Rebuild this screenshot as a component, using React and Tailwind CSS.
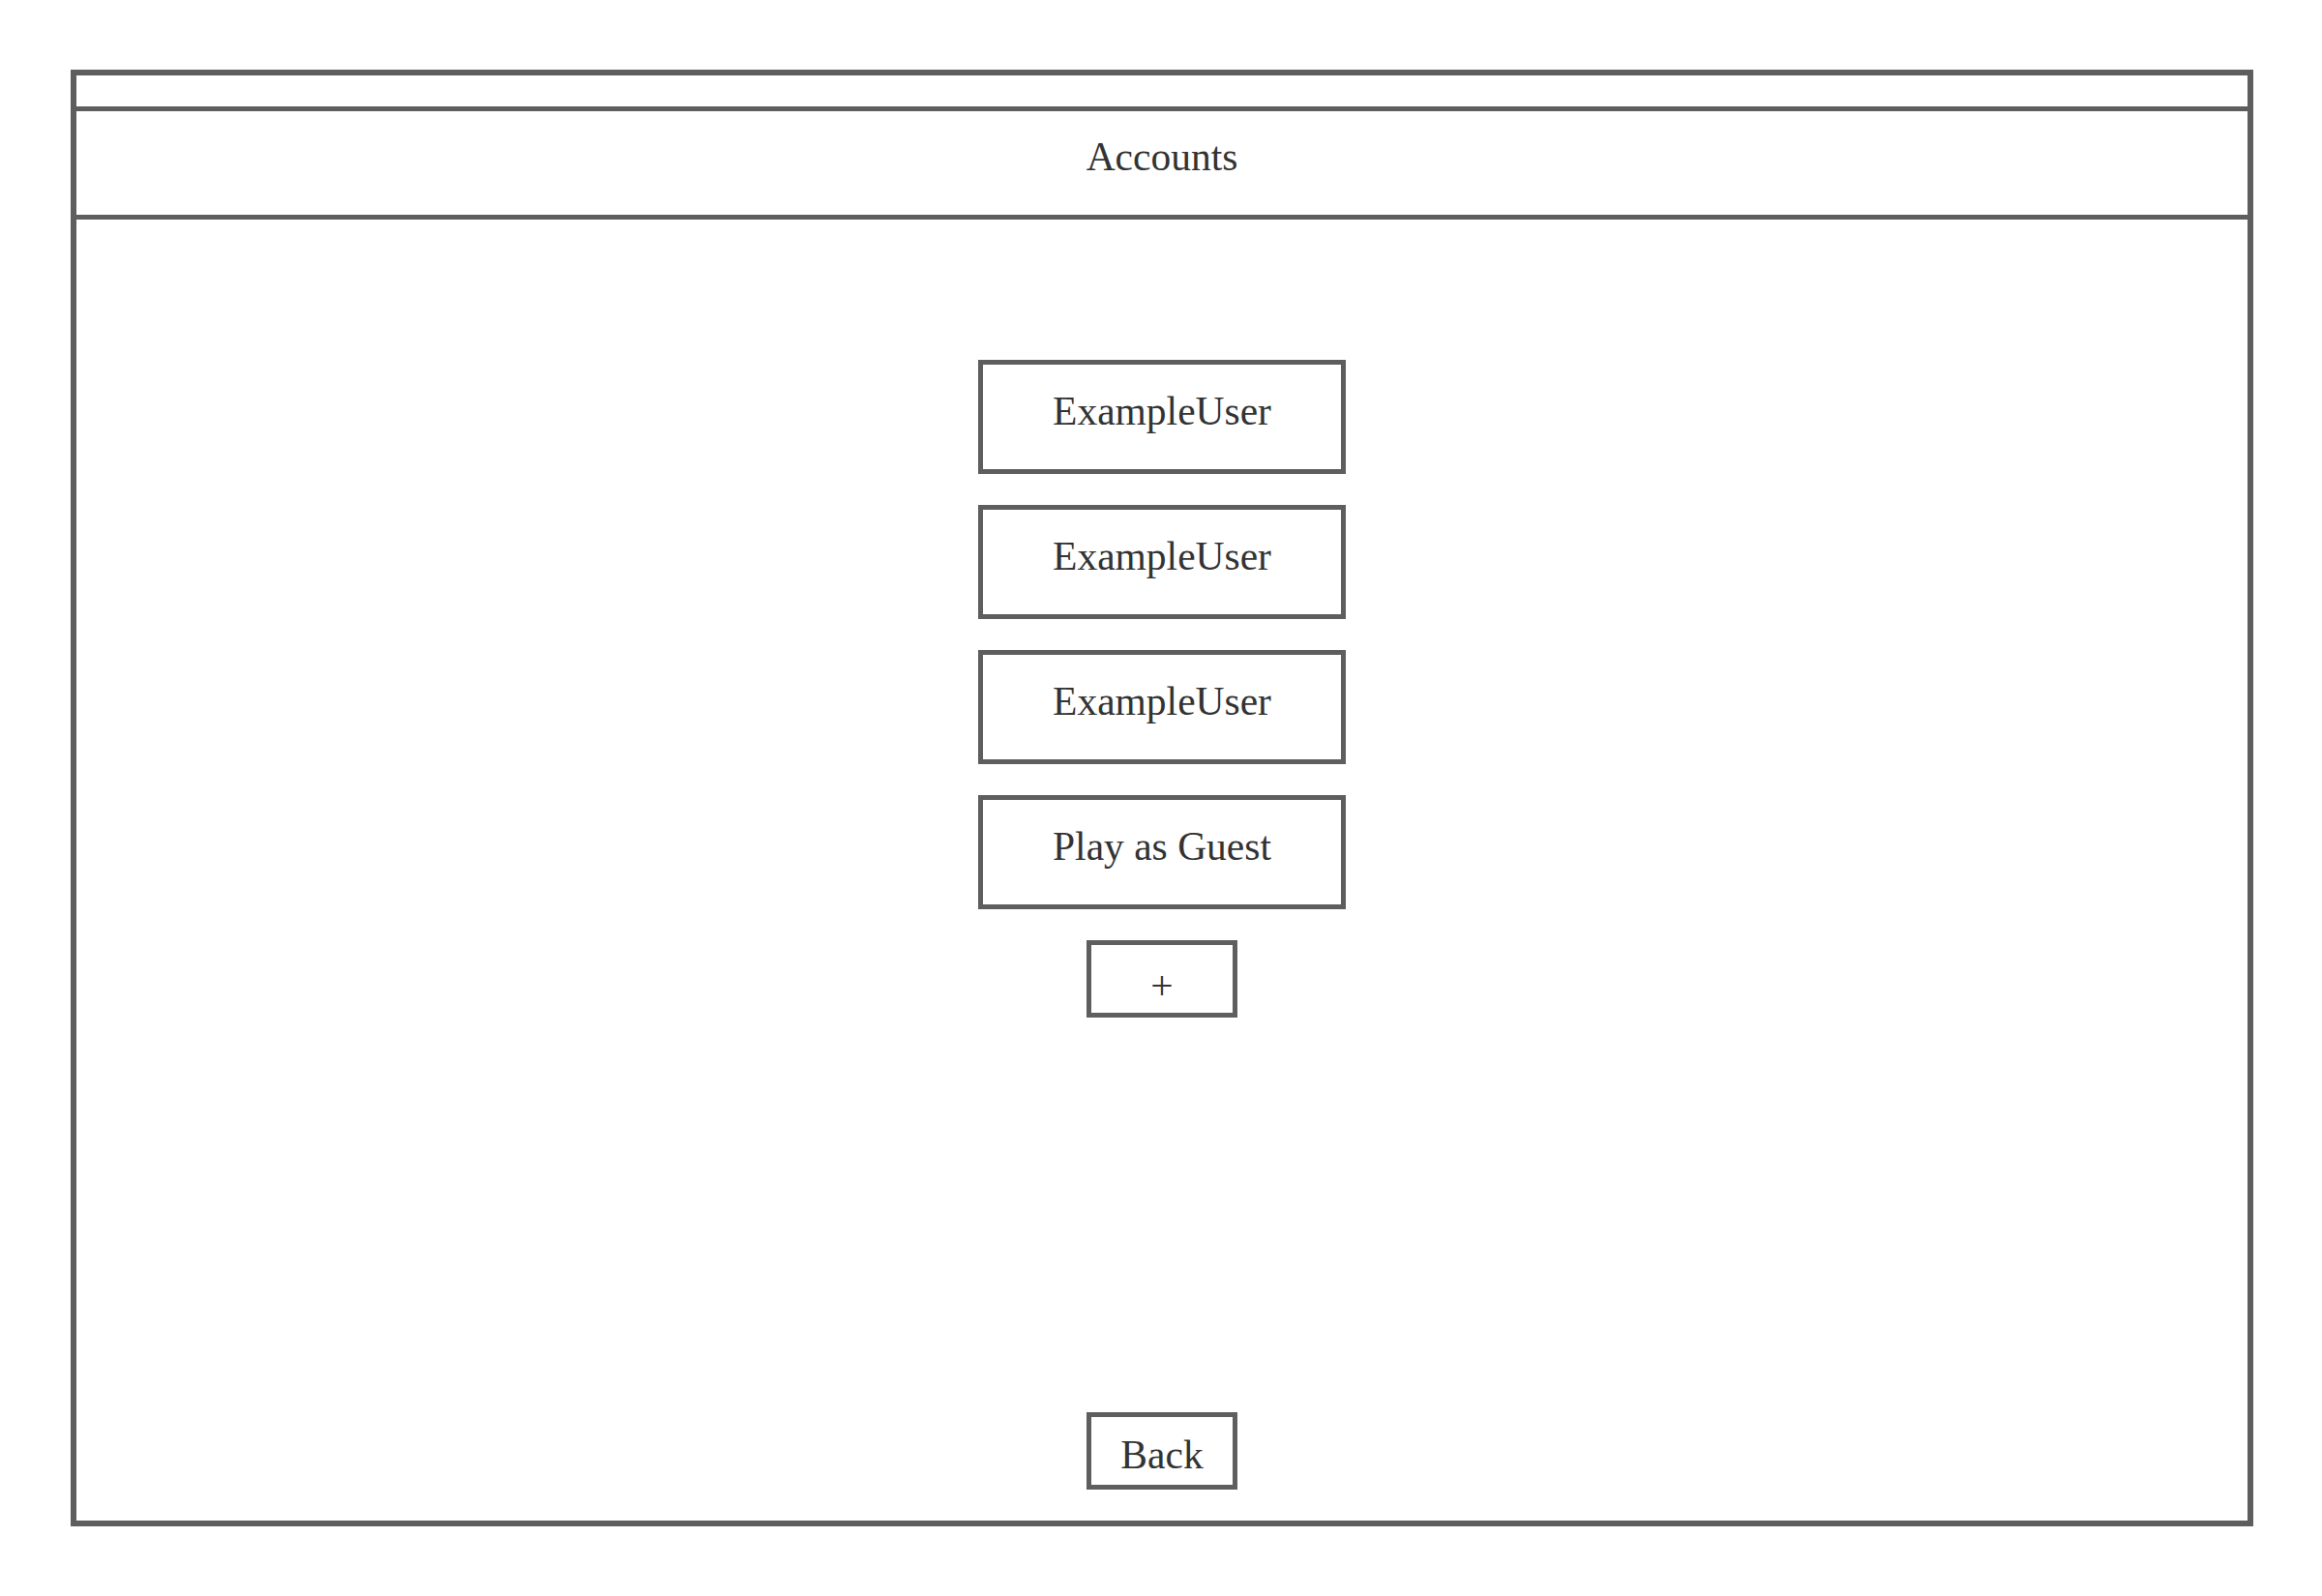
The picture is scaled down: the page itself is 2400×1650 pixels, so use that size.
import React from "react";

const users = ["ExampleUser", "ExampleUser", "ExampleUser"];

const AccountButton = ({ children }) => (
  <button className="w-[380px] h-[118px] border-[5px] border-[#5e5e5e] bg-white flex items-center justify-center pb-3 text-[41.5px] text-[#333333]">
    {children}
  </button>
);

const App = () => {
  return (
    <div
      className="w-[2400px] h-[1650px] bg-white pt-[72px] pl-[73px]"
      style={{ fontFamily: '"Liberation Serif", "Times New Roman", serif' }}
    >
      <div className="w-[2256px] h-[1506px] border-[6px] border-[#5e5e5e] flex flex-col">
        {/* top strip */}
        <div className="h-[32px]" />

        {/* title bar */}
        <div className="h-[117px] border-y-[5px] border-[#5e5e5e] flex items-center justify-center pb-3">
          <span className="text-[41.5px] text-[#333333]">Accounts</span>
        </div>

        {/* account list */}
        <div className="flex-1 flex flex-col items-center pt-[145px]">
          <div className="flex flex-col items-center gap-[32px]">
            {users.map((u, i) => (
              <AccountButton key={i}>{u}</AccountButton>
            ))}
            <AccountButton>Play as Guest</AccountButton>
            <button className="w-[156px] h-[80px] border-[5px] border-[#5e5e5e] bg-white flex items-center justify-center pt-[14px] text-[41.5px] text-[#333333]">
              +
            </button>
          </div>

          <button className="mt-auto mb-[32px] w-[156px] h-[80px] border-[5px] border-[#5e5e5e] bg-white flex items-center justify-center pt-2 text-[41.5px] text-[#333333]">
            Back
          </button>
        </div>
      </div>
    </div>
  );
};

export default App;
